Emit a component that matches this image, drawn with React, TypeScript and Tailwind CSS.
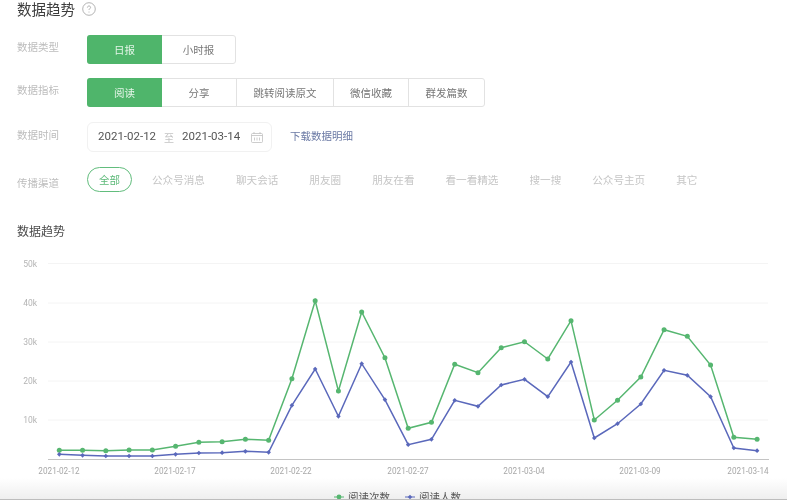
const GREEN = [691,691,692,690,690,679,667,665,658,661,476,242,513,276,413,625,607,433,458,383,365,417,302,600,541,471,329,349,435,652,658]
const BLUE = [703,706,708,708,708,703,699,698,694,697,556,447,589,431,539,674,658,541,559,495,478,530,426,654,611,552,451,466,530,684,692]

const FONT = { fontFamily: '"Noto Sans CJK SC", sans-serif' }

// chart svg starts at y=250, values above were read from a 3x crop with origin y=220
const px = (i: number) => 59.3 + i * 23.26
const py = (v: number) => v / 3 - 30
const line = (vals: number[]) => vals.map((v, i) => `${px(i).toFixed(1)},${py(v).toFixed(1)}`).join(' ')

const YTICKS = [['50k', 13.5], ['40k', 53], ['30k', 92], ['20k', 131], ['10k', 170]] as const
const XTICKS = [['2021-02-12', 59], ['2021-02-17', 175], ['2021-02-22', 291], ['2021-02-27', 408], ['2021-03-04', 524], ['2021-03-09', 640], ['2021-03-14', 748]] as const

function Row({ label, labelClass, children, className }: { label: string; labelClass: string; children: React.ReactNode; className: string }) {
  return (
    <div className={`flex items-center ${className}`}>
      <span className={`w-[70px] shrink-0 text-[10.5px] text-[#bdbdbd] ${labelClass}`}>{label}</span>
      {children}
    </div>
  )
}

function Segments({ items, widths }: { items: string[]; widths: string[] }) {
  return (
    <div className="flex h-[29px] rounded-[3px] border border-[#e2e2e2]">
      {items.map((item, i) => (
        <div
          key={item}
          className={`flex items-center justify-center text-[10.5px] ${widths[i]} ${i === 0 ? '-m-px mr-0 h-[29px] rounded-l-[3px] bg-[#4fb56b] text-[#e4f5e8]' : 'border-l border-[#e2e2e2] text-[#777777]'} ${i === 1 ? 'border-l-0' : ''}`}
        >
          {item}
        </div>
      ))}
    </div>
  )
}

export default function App() {
  return (
    <div className="relative h-[500px] w-[787px] overflow-hidden bg-white pl-[17px] blur-[0.35px]" style={FONT}>
      <div className="flex h-[17px] items-center gap-[7px]">
        <h1 className="text-[14.5px] leading-[17px] font-normal text-[#3d3d3d]">数据趋势</h1>
        <svg width="14" height="14" viewBox="0 0 14 14" fill="none" stroke="#a0a0a0" strokeWidth="0.8">
          <circle cx="7" cy="7" r="6.3" />
          <path d="M5.4 5.6c0-1 .7-1.6 1.6-1.6s1.6.6 1.6 1.4c0 1.1-1.6 1.3-1.6 2.6" />
          <path d="M7 9.6v.9" />
        </svg>
      </div>

      <Row label="数据类型" labelClass="mb-[5px]" className="mt-[18px]">
        <Segments items={['日报', '小时报']} widths={['w-[75px]', 'w-[73px]']} />
      </Row>
      <Row label="数据指标" labelClass="mb-[5px]" className="mt-[14px]">
        <Segments
          items={['阅读', '分享', '跳转阅读原文', '微信收藏', '群发篇数']}
          widths={['w-[75px]', 'w-[74px]', 'w-[97px]', 'w-[75px]', 'w-[76px]']}
        />
      </Row>
      <Row label="数据时间" labelClass="mb-[5px]" className="mt-[15px]">
        <div className="flex h-[30px] w-[185px] items-center rounded-[6px] border border-[#f1f1f1] pl-[10px] text-[#555555]">
          <span className="text-[11.5px]" style={{ fontFamily: 'Roboto, sans-serif' }}>2021-02-12</span>
          <span className="ml-2 text-[10px] text-[#c4c4c4]">至</span>
          <span className="ml-2 text-[11.5px]" style={{ fontFamily: 'Roboto, sans-serif' }}>2021-03-14</span>
          <svg className="ml-[11px]" width="12" height="11" viewBox="0 0 12 11" fill="none" stroke="#c0c0c0" strokeWidth="0.8">
            <rect x="0.5" y="1.5" width="11" height="9" rx="1" />
            <path d="M0.5 3.5h11M3 0v2M9 0v2M3.5 5.5v3M6 5.5v3M8.5 5.5v3" />
          </svg>
        </div>
        <span className="mb-[3px] ml-[18px] text-[10.5px] text-[#6b7aa5]">下载数据明细</span>
      </Row>
      <Row label="传播渠道" labelClass="mt-[6px]" className="mt-[15px]">
        <span className="flex h-[25px] w-[45px] items-center justify-center rounded-full border border-[#62bd7d] text-[10.5px] text-[#5cb978]">全部</span>
        <div className="ml-5 flex gap-[31px] text-[10.6px] text-[#c6c6c6]">
          {['公众号消息', '聊天会话', '朋友圈', '朋友在看', '看一看精选', '搜一搜', '公众号主页', '其它'].map(t => (
            <span key={t}>{t}</span>
          ))}
        </div>
      </Row>

      <h2 className="mt-[30px] text-[12px] leading-[18px] font-normal text-[#4a4a4a]">数据趋势</h2>

      <svg className="absolute top-[250px] left-0" width="787" height="250" viewBox="0 0 787 250">
        {YTICKS.map(([t, y]) => (
          <g key={t}>
            <line x1="48" x2="768" y1={y} y2={y} stroke="#f4f4f4" />
            <text x="37" y={y + 3} textAnchor="end" fontSize="8.5" fill="#b4b4b4" fontFamily="Roboto, sans-serif">{t}</text>
          </g>
        ))}
        <line x1="48" x2="769" y1="209.5" y2="209.5" stroke="#c4c4c4" />
        {XTICKS.map(([t, x]) => (
          <text key={t} x={x} y="224" textAnchor="middle" fontSize="8.2" fill="#a8a8a8" fontFamily="Roboto, sans-serif">{t}</text>
        ))}
        <polyline points={line(GREEN)} fill="none" stroke="#56b670" strokeWidth="1.5" />
        <polyline points={line(BLUE)} fill="none" stroke="#5a68bb" strokeWidth="1.5" />
        {GREEN.map((v, i) => <circle key={i} cx={px(i)} cy={py(v)} r="2.5" fill="#56b670" />)}
        {BLUE.map((v, i) => (
          <path key={i} d={`M${px(i)} ${py(v) - 2.3}l2.3 2.3-2.3 2.3-2.3-2.3z`} fill="#5a68bb" />
        ))}
      </svg>

      {/* strip along the bottom edge */}
      <div className="absolute right-0 bottom-0 left-0 h-[22px] bg-gradient-to-b from-white to-[#eeeeee]" />

      <div className="absolute bottom-[-4px] left-[334px] flex items-center gap-[15px] text-[10.5px] leading-[14px] text-[#555555]">
        <span className="flex items-center gap-[4px]">
          <svg width="10" height="6" viewBox="0 0 10 6"><path d="M0 3h10" stroke="#56b670" /><circle cx="5" cy="3" r="2.4" fill="#56b670" /></svg>
          阅读次数
        </span>
        <span className="flex items-center gap-[4px]">
          <svg width="10" height="6" viewBox="0 0 10 6"><path d="M0 3h10" stroke="#5a68bb" /><path d="M5 .8L7.2 3 5 5.2 2.8 3z" fill="#5a68bb" /></svg>
          阅读人数
        </span>
      </div>

      <div className="absolute bottom-0 left-0 h-[1.5px] w-full bg-[#bdbdbd]" />
    </div>
  )
}
